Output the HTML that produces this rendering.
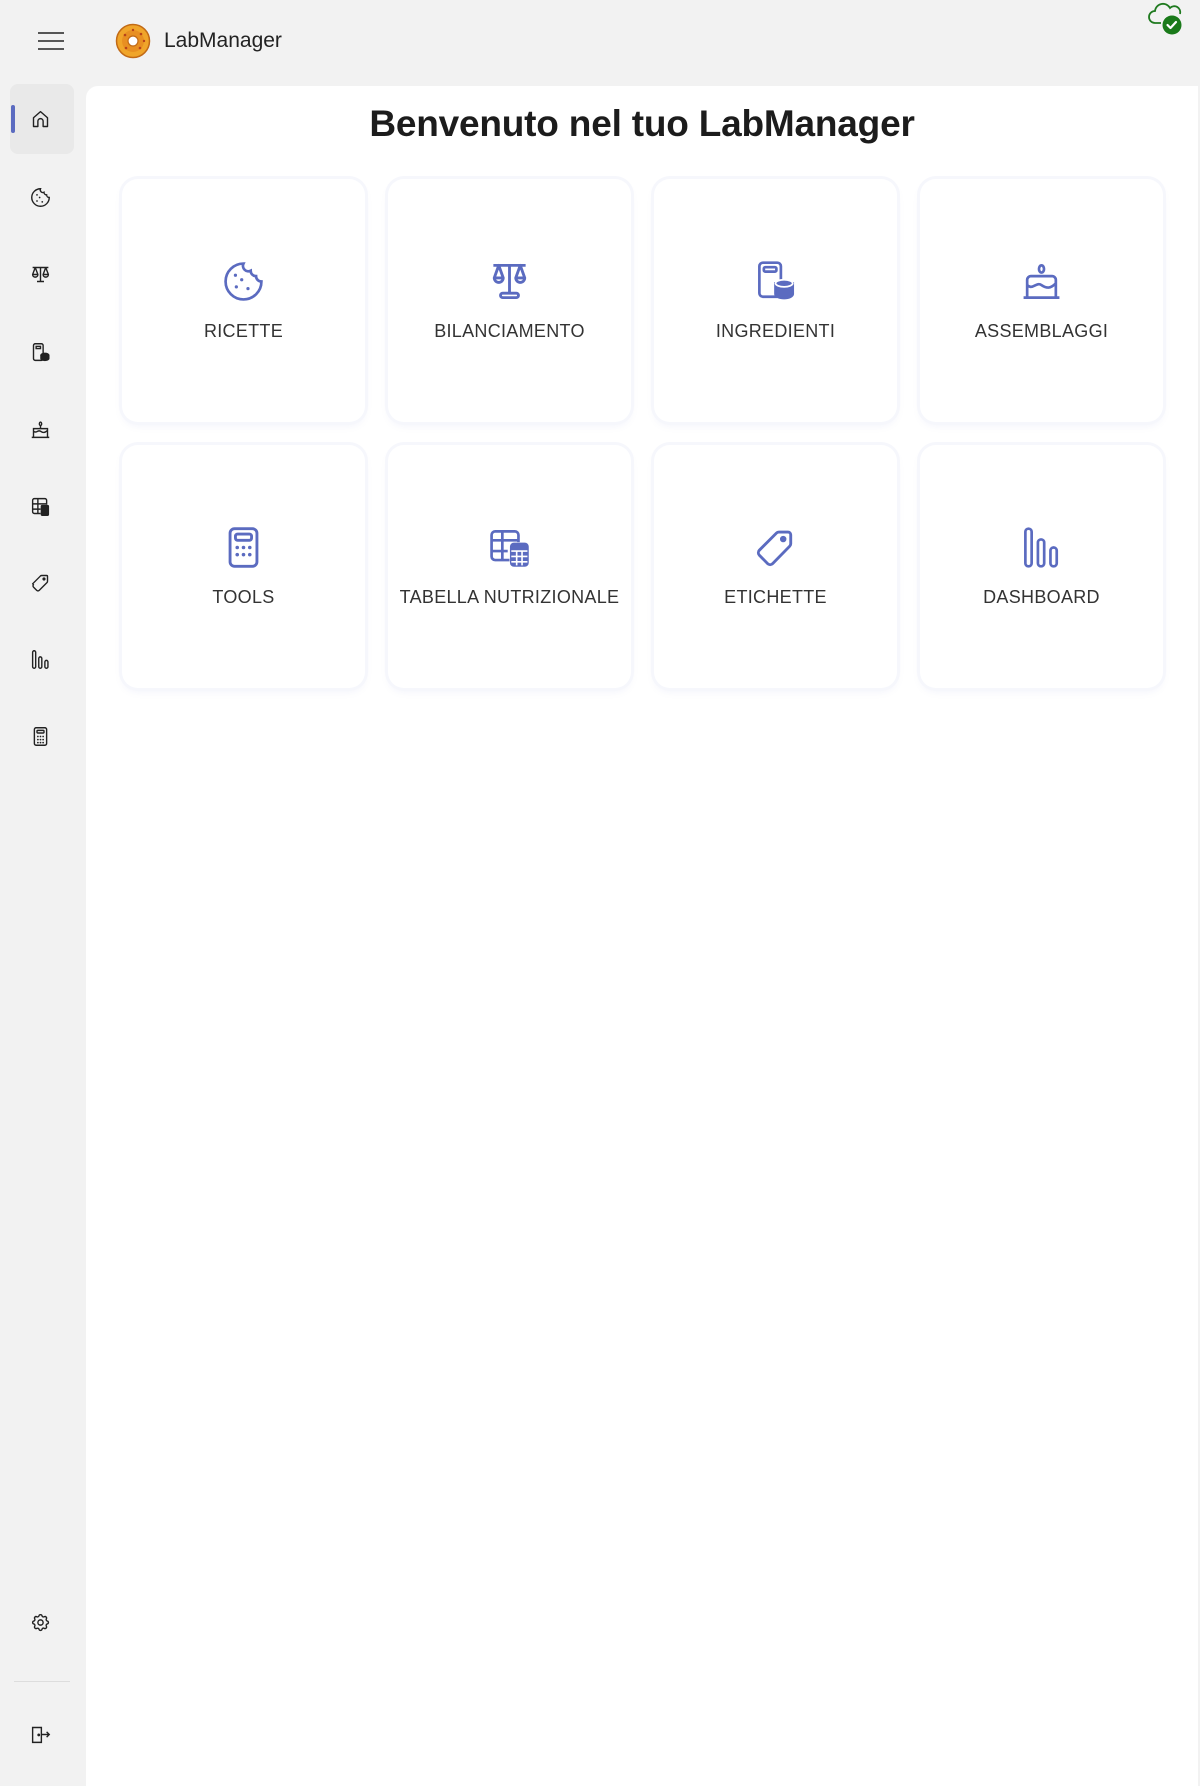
<!DOCTYPE html>
<html><head><meta charset="utf-8"><style>
*{box-sizing:border-box;margin:0;padding:0}
body{width:1200px;height:1773px;background:#f2f2f2;font-family:"Liberation Sans",Roboto,sans-serif;position:relative;overflow:hidden}
.abs{position:absolute}
.panel{left:86px;top:86px;width:1112px;height:1700px;background:#fff;border-radius:12px 0 0 0}
h1{position:absolute;left:86px;width:1112px;top:103px;text-align:center;font-size:37px;font-weight:bold;color:#1c1c1c;letter-spacing:-0.2px}
.card{position:absolute;width:243px;height:243px;background:#fff;border-radius:16px;box-shadow:0 0 0 3px #f6f7fc,0 4px 8px rgba(100,110,200,0.08)}
.card svg{position:absolute;left:100px;top:81px;width:43px;height:43px}
.card span{position:absolute;left:0;right:0;top:142px;text-align:center;font-size:18px;color:#333;letter-spacing:0.3px}
.si{position:absolute;left:30px;width:21px;height:21px}
</style></head><body>
<!-- header -->
<svg class="abs" style="left:38px;top:31px" width="26" height="20" viewBox="0 0 26 20"><g stroke="#222" stroke-width="1.6"><line x1="0" y1="2" x2="26" y2="2"/><line x1="0" y1="10" x2="26" y2="10"/><line x1="0" y1="18" x2="26" y2="18"/></g></svg>
<svg class="abs" style="left:115px;top:23px" width="36" height="36" viewBox="0 0 36 36"><circle cx="18" cy="18" r="16.5" fill="#f0a52a" stroke="#c26a16" stroke-width="1.5"/><circle cx="18" cy="18" r="11" fill="#e88f22"/><g fill="#b8431a"><circle cx="10" cy="12" r="1.3"/><circle cx="26" cy="11" r="1.3"/><circle cx="25" cy="25" r="1.3"/><circle cx="11" cy="25" r="1.3"/><circle cx="18" cy="7" r="1.2"/><circle cx="29" cy="18" r="1.2"/></g><circle cx="18" cy="18" r="5" fill="#fff" stroke="#c26a16" stroke-width="1.2"/></svg>
<div class="abs" style="left:164px;top:29px;font-size:21px;color:#222">LabManager</div>
<svg class="abs" style="left:1147px;top:1px" width="38" height="36" viewBox="0 0 38 36"><path d="M14 22H8a6 6 0 0 1 0-12 8 8 0 0 1 15-3 6 6 0 0 1 10 6" fill="none" stroke="#1f7a1f" stroke-width="1.8"/><circle cx="25" cy="24" r="9.5" fill="#1a7a1a"/><path d="M20.5 24l3 3 5.5-6" fill="none" stroke="#fff" stroke-width="2.2" stroke-linecap="round" stroke-linejoin="round"/></svg>
<!-- sidebar -->
<div class="abs" style="left:10px;top:84px;width:64px;height:70px;background:#e9e9e9;border-radius:8px"></div>
<div class="abs" style="left:11px;top:105px;width:4px;height:28px;background:#5b6bc0;border-radius:2px"></div>
<svg class="si" style="top:109px" viewBox="0 0 24 24" fill="none" stroke="#222" stroke-width="1.6" stroke-linejoin="round"><path d="M4 10l8-7 8 7v10h-5v-6a3 3 0 0 0-6 0v6H4z"/></svg>
<svg class="si" style="top:187px" viewBox="0 0 24 24" fill="none" stroke="#222" stroke-width="1.6"><path d="M12 2a10 10 0 1 0 10 10 3 3 0 0 1-3-3 3 3 0 0 1-3-3 3 3 0 0 1-4-4z"/><g fill="#222" stroke="none"><circle cx="8" cy="9" r="1"/><circle cx="11" cy="12" r="1"/><circle cx="8" cy="16" r="1"/><circle cx="14" cy="17" r="1"/></g></svg>
<svg class="si" style="top:264px" viewBox="0 0 24 24" fill="none" stroke="#222" stroke-width="1.6" stroke-linejoin="round"><path d="M3 4h18M12 4v16M8 20h8M6 4l-3 8a3 3 0 0 0 6 0zM18 4l-3 8a3 3 0 0 0 6 0zM3 12h6M15 12h6"/></svg>
<svg class="si" style="top:342px" viewBox="0 0 24 24" fill="none" stroke="#222" stroke-width="1.6"><rect x="4" y="2" width="11" height="19" rx="2"/><rect x="7" y="5" width="5" height="2.5"/><ellipse cx="17" cy="15" rx="4.5" ry="2" fill="#222"/><path d="M12.5 15v4c0 1.1 2 2 4.5 2s4.5-.9 4.5-2v-4" fill="#222"/></svg>
<svg class="si" style="top:419px" viewBox="0 0 24 24" fill="none" stroke="#222" stroke-width="1.6"><path d="M2 21h20M4 21V11h16v10M4 14c3 3 5-2 8 0s5 2 8-1M12 11V8"/><ellipse cx="12" cy="5.5" rx="1.3" ry="2"/></svg>
<svg class="si" style="top:496px" viewBox="0 0 24 24" fill="none" stroke="#222" stroke-width="1.6"><path d="M12 20H5a2 2 0 0 1-2-2V5a2 2 0 0 1 2-2h12a2 2 0 0 1 2 2v5M3 9h16M3 15h9M9 3v17"/><rect x="13" y="11" width="8" height="11" rx="1" fill="#222"/></svg>
<svg class="si" style="top:572px" viewBox="0 0 24 24" fill="none" stroke="#222" stroke-width="1.6" stroke-linejoin="round"><path d="M3 13.5l9-9a2 2 0 0 1 1.5-.5H19a1 1 0 0 1 1 1v5.5a2 2 0 0 1-.5 1.5l-9 9a2 2 0 0 1-2.8 0l-3.7-3.7a2 2 0 0 1 0-2.8z"/><circle cx="16" cy="8" r="1" fill="#222"/></svg>
<svg class="si" style="top:649px" viewBox="0 0 24 24" fill="none" stroke="#222" stroke-width="1.6"><rect x="3" y="2" width="3.5" height="20" rx="1.7"/><rect x="10" y="9" width="3.5" height="13" rx="1.7"/><rect x="17" y="13" width="3.5" height="9" rx="1.7"/></svg>
<svg class="si" style="top:726px" viewBox="0 0 24 24" fill="none" stroke="#222" stroke-width="1.6"><rect x="5" y="2" width="14" height="20" rx="2"/><rect x="8" y="5" width="8" height="3" rx="1"/><g fill="#222" stroke="none"><circle cx="9" cy="12" r="1"/><circle cx="12" cy="12" r="1"/><circle cx="15" cy="12" r="1"/><circle cx="9" cy="15.5" r="1"/><circle cx="12" cy="15.5" r="1"/><circle cx="15" cy="15.5" r="1"/><circle cx="9" cy="19" r="1"/><circle cx="12" cy="19" r="1"/><circle cx="15" cy="19" r="1"/></g></svg>
<svg class="si" style="top:1612px" viewBox="0 0 24 24" fill="none" stroke="#222" stroke-width="1.6"><path d="M10.3 4.3c.4-1.7 3-1.7 3.4 0a1.7 1.7 0 0 0 2.6 1.1c1.5-.9 3.3.8 2.4 2.4a1.7 1.7 0 0 0 1 2.5c1.8.4 1.8 3 0 3.4a1.7 1.7 0 0 0-1 2.6c.9 1.5-.9 3.300-2.4 2.4a1.7 1.7 0 0 0-2.6 1c-.4 1.8-3 1.8-3.4 0a1.7 1.7 0 0 0-2.5-1c-1.6.9-3.3-.9-2.4-2.4a1.7 1.7 0 0 0-1.1-2.6c-1.7-.4-1.7-3 0-3.4a1.7 1.7 0 0 0 1.1-2.5c-.9-1.6.8-3.3 2.4-2.4a1.7 1.7 0 0 0 2.5-1.1z"/><circle cx="12" cy="12" r="3"/></svg>
<div class="abs" style="left:14px;top:1681px;width:56px;height:1px;background:#ddd"></div>
<svg class="si" style="top:1724px" viewBox="0 0 24 24" fill="none" stroke="#222" stroke-width="1.6"><path d="M13 4H3v17h10V4zM13 12h9M19 9l3 3-3 3"/><circle cx="10" cy="12.5" r=".8" fill="#222"/></svg>
<!-- main -->
<div class="abs panel"></div>
<h1>Benvenuto nel tuo LabManager</h1>
<div class="card" style="left:122px;top:179px"><svg viewBox="0 0 24 24" fill="none" stroke="#5b6bc0" stroke-width="1.5"><path d="M12 2a10 10 0 1 0 10 10 3 3 0 0 1-3-3 3 3 0 0 1-3-3 3 3 0 0 1-4-4z"/><g fill="#5b6bc0" stroke="none"><circle cx="7.5" cy="8.5" r=".9"/><circle cx="11" cy="11" r=".9"/><circle cx="8" cy="15" r=".9"/><circle cx="14.5" cy="16" r=".9"/></g></svg><span>RICETTE</span></div>
<div class="card" style="left:388px;top:179px"><svg viewBox="0 0 24 24" fill="none" stroke="#5b6bc0" stroke-width="1.6" stroke-linejoin="round"><path d="M3 3h18M12 3v16M6 3l-2.5 7h5zM18 3l-2.5 7h5zM3.5 10a2.5 2.5 0 0 0 5 0M15.5 10a2.5 2.5 0 0 0 5 0"/><rect x="7" y="18.5" width="10" height="2.5" rx="1.2"/></svg><span>BILANCIAMENTO</span></div>
<div class="card" style="left:654px;top:179px"><svg viewBox="0 0 24 24" fill="none" stroke="#5b6bc0" stroke-width="1.5"><rect x="3" y="1.5" width="12" height="19" rx="2"/><rect x="5.5" y="4" width="7" height="2.5" rx=".8"/><path d="M12 13v6c0 1.2 2 2.2 4.8 2.2s4.8-1 4.8-2.2v-6z" fill="#5b6bc0"/><ellipse cx="16.8" cy="13" rx="4.8" ry="2" fill="#5b6bc0" stroke="#fff" stroke-width="1"/></svg><span>INGREDIENTI</span></div>
<div class="card" style="left:920px;top:179px"><svg viewBox="0 0 24 24" fill="none" stroke="#5b6bc0" stroke-width="1.5"><path d="M2 21h20M4 21V11c0-1 1-2 2-2h12c1 0 2 1 2 2v10M4 14c3 3 5-2 8 0s5 2 8-1"/><ellipse cx="12" cy="5" rx="1.4" ry="2"/></svg><span>ASSEMBLAGGI</span></div>
<div class="card" style="left:122px;top:445px"><svg viewBox="0 0 24 24" fill="none" stroke="#5b6bc0" stroke-width="1.6"><rect x="4.5" y="1.5" width="15" height="21" rx="2.5"/><rect x="7.5" y="4.5" width="9" height="3.5" rx="1.2"/><g fill="#5b6bc0" stroke="none"><circle cx="8.5" cy="12" r="1"/><circle cx="12" cy="12" r="1"/><circle cx="15.5" cy="12" r="1"/><circle cx="8.5" cy="16" r="1"/><circle cx="12" cy="16" r="1"/><circle cx="15.5" cy="16" r="1"/></g></svg><span>TOOLS</span></div>
<div class="card" style="left:388px;top:445px"><svg viewBox="0 0 24 24" fill="none" stroke="#5b6bc0" stroke-width="1.5"><path d="M12 19H4a2 2 0 0 1-2-2V5a2 2 0 0 1 2-2h11a2 2 0 0 1 2 2v4M2 8h15M2 14h9M8 3v16"/><rect x="13" y="10" width="9" height="12" rx="1.5" fill="#5b6bc0"/><path d="M13 14h9M13 17h9M13 20h9M16 14v8M19 14v8" stroke="#fff" stroke-width=".9"/></svg><span>TABELLA NUTRIZIONALE</span></div>
<div class="card" style="left:654px;top:445px"><svg viewBox="0 0 24 24" fill="none" stroke="#5b6bc0" stroke-width="1.6" stroke-linejoin="round"><path d="M3 13.5l9.5-9.5a2 2 0 0 1 1.4-.6H19a1.5 1.5 0 0 1 1.5 1.5v5a2 2 0 0 1-.6 1.4L10.4 21a2 2 0 0 1-2.8 0L3 16.3a2 2 0 0 1 0-2.8z"/><circle cx="16.3" cy="7.3" r="1" fill="#5b6bc0"/></svg><span>ETICHETTE</span></div>
<div class="card" style="left:920px;top:445px"><svg viewBox="0 0 24 24" fill="none" stroke="#5b6bc0" stroke-width="1.5"><rect x="3" y="1.5" width="3.5" height="21" rx="1.7"/><rect x="10" y="7.5" width="3.5" height="15" rx="1.7"/><rect x="17" y="12" width="3.5" height="10.5" rx="1.7"/></svg><span>DASHBOARD</span></div>
</body></html>
